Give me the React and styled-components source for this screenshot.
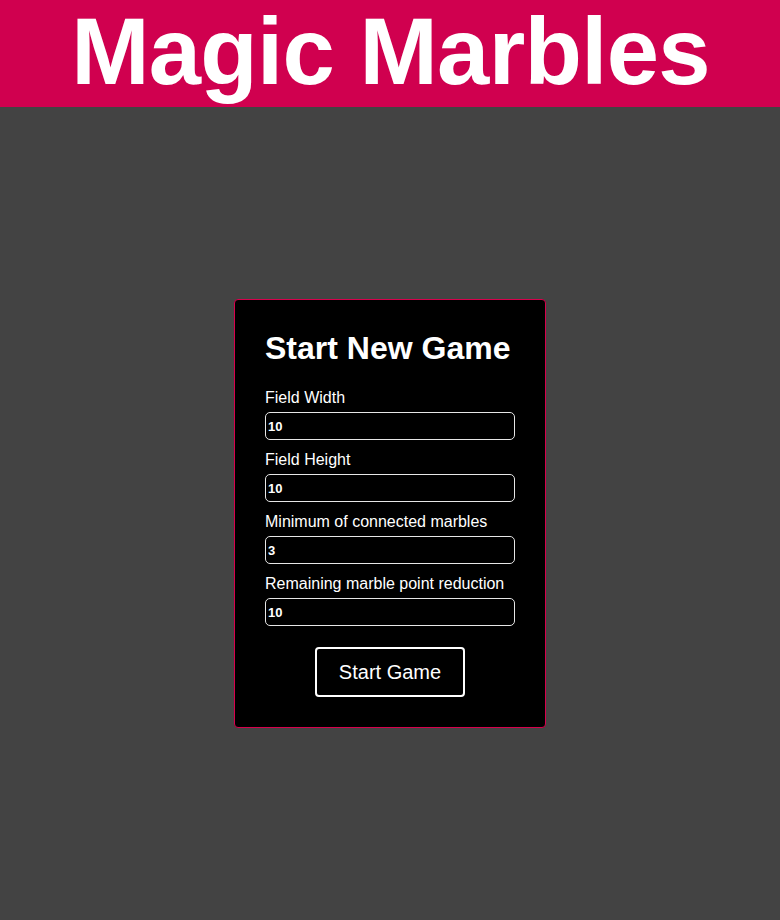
import React from "react";
import styled, { createGlobalStyle } from "styled-components";

const Global = createGlobalStyle`
  html, body { margin: 0; padding: 0; background: #434343; }
  body { font-family: "Liberation Sans", Arial, sans-serif; }
  #root { min-height: 920px; display: flex; flex-direction: column; }
`;

const Header = styled.header`
  background: #d0004f;
  height: 107px;
  display: flex;
  align-items: flex-start;
  justify-content: center;
  overflow: hidden;
`;

const Title = styled.h1`
  margin: 0;
  margin-left: 1px;
  color: #fff;
  font-size: 94px;
  font-weight: 700;
  line-height: 104px;
  letter-spacing: -0.7px;
`;

const Main = styled.main`
  flex: 1;
  display: flex;
  align-items: center;
  justify-content: center;
`;

const Card = styled.form`
  background: #000;
  border: 1px solid #d8004c;
  border-radius: 4px;
  padding: 29px 30px 30px;
  width: 250px;
  display: flex;
  flex-direction: column;
  color: #fff;
`;

const CardTitle = styled.h2`
  margin: 0 0 22px;
  font-size: 32px;
  font-weight: 700;
  line-height: 38px;
`;

const Field = styled.div`
  display: flex;
  flex-direction: column;
  gap: 5px;
  margin-bottom: 11px;
`;

const Label = styled.label`
  font-size: 16px;
  line-height: 18px;
`;

const Input = styled.input`
  box-sizing: border-box;
  width: 250px;
  height: 28px;
  background: #000;
  color: #fff;
  border: 1px solid #e6e6e6;
  border-radius: 5px;
  padding: 0 2px;
  font-family: "Liberation Sans", Arial, sans-serif;
  font-size: 13px;
  font-weight: 700;
  outline: none;
`;

const Button = styled.button`
  align-self: center;
  margin-top: 10px;
  width: 150px;
  height: 50px;
  background: #000;
  color: #fff;
  border: 2px solid #fff;
  border-radius: 4px;
  font-family: "Liberation Sans", Arial, sans-serif;
  font-size: 20px;
  cursor: pointer;
`;

const fields = [
  ["Field Width", "10"],
  ["Field Height", "10"],
  ["Minimum of connected marbles", "3"],
  ["Remaining marble point reduction", "10"],
];

export default function App() {
  return (
    <>
      <Global />
      <Header>
        <Title>Magic Marbles</Title>
      </Header>
      <Main>
        <Card onSubmit={(e) => e.preventDefault()}>
          <CardTitle>Start New Game</CardTitle>
          {fields.map(([label, value], i) => (
            <Field key={label}>
              <Label htmlFor={`f${i}`}>{label}</Label>
              <Input id={`f${i}`} type="text" defaultValue={value} />
            </Field>
          ))}
          <Button type="submit">Start Game</Button>
        </Card>
      </Main>
    </>
  );
}
